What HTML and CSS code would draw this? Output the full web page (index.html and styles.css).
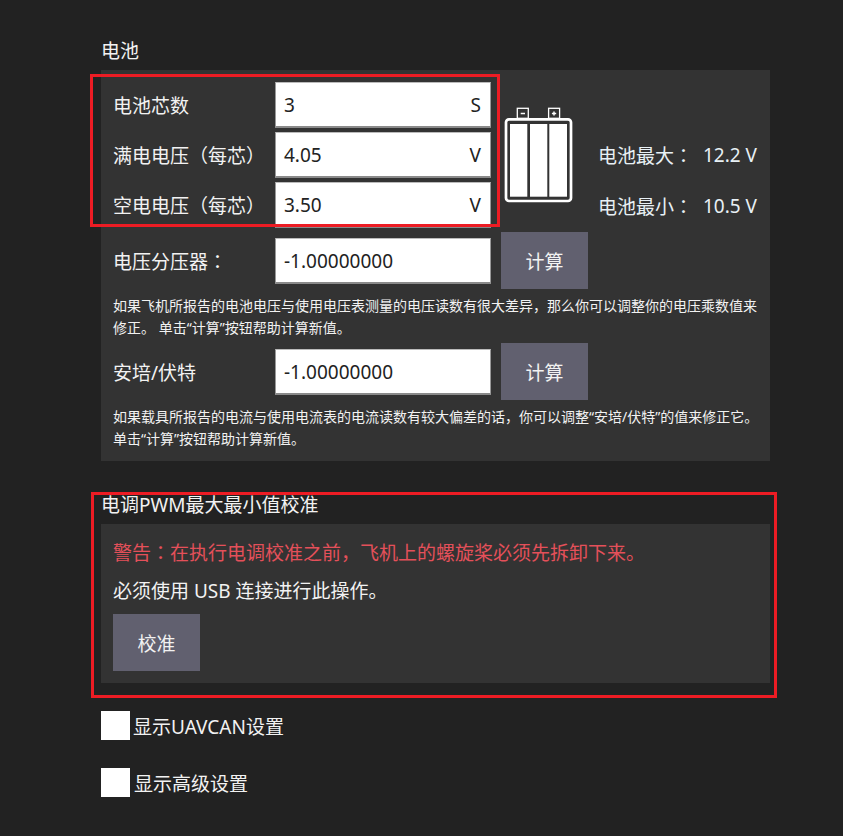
FILE: index.html
```html
<!DOCTYPE html>
<html lang="zh">
<head>
    <meta charset="utf-8">
    <title>电池</title>
    <link rel="stylesheet" href="styles.css">
</head>
<body>
    <div class="page">
        <h3 class="section-title">电池</h3>
        <div class="panel battery-panel">
            <div class="cell-block">
                <div class="cell-fields">
                    <div class="row">
                        <label class="row-label">电池芯数</label>
                        <div class="field"><span>3</span><span>S</span></div>
                    </div>
                    <div class="row">
                        <label class="row-label">满电电压（每芯）</label>
                        <div class="field"><span>4.05</span><span>V</span></div>
                    </div>
                    <div class="row">
                        <label class="row-label">空电电压（每芯）</label>
                        <div class="field"><span>3.50</span><span>V</span></div>
                    </div>
                </div>
                <svg class="battery-icon" width="70" height="96" viewBox="0 0 70 96">
                    <g fill="none" stroke="#fff" stroke-width="1.3">
                        <rect x="13.300" y="1.300" width="11" height="10"/>
                        <rect x="44.600" y="1.300" width="11" height="10"/>
                    </g>
                    <path d="M16.700 6.500h4.300M47.900 6.500h4.300M50 4.400v4.200" stroke="#fff" stroke-width="1.5"/>
                    <rect x="2" y="12.300" width="65" height="81.700" rx="3" fill="none" stroke="#fff" stroke-width="2.700"/>
                    <rect x="6" y="17" width="17.300" height="72.700" fill="#fff"/>
                    <rect x="26" y="17" width="17.300" height="72.700" fill="#fff"/>
                    <rect x="45.300" y="17" width="17.700" height="72.700" fill="#fff"/>
                </svg>
                <div class="cell-totals">
                    <div class="total"><span>电池最大<span class="colon" lang="zh-TW">：</span></span><span>12.2 V</span></div>
                    <div class="total"><span>电池最小<span class="colon" lang="zh-TW">：</span></span><span>10.5 V</span></div>
                </div>
            </div>
            <div class="row calc-row">
                <label class="row-label">电压分压器<span class="colon" lang="zh-TW">：</span></label>
                <div class="field"><span>-1.00000000</span></div>
                <button class="action-btn">计算</button>
            </div>
            <p class="hint">如果飞机所报告的电池电压与使用电压表测量的电压读数有很大差异，那么你可以调整你的电压乘数值来修正。 单击“计算”按钮帮助计算新值。</p>
            <div class="row calc-row">
                <label class="row-label">安培/伏特</label>
                <div class="field"><span>-1.00000000</span></div>
                <button class="action-btn">计算</button>
            </div>
            <p class="hint">如果载具所报告的电流与使用电流表的电流读数有较大偏差的话，你可以调整“安培/伏特”的值来修正它。 单击“计算”按钮帮助计算新值。</p>
        </div>

        <h3 class="section-title esc-title">电调PWM最大最小值校准</h3>
        <div class="panel esc-panel">
            <p class="warning">警告<span class="colon" lang="zh-TW">：</span>在执行电调校准之前，飞机上的螺旋桨必须先拆卸下来。</p>
            <p class="notice">必须使用 USB 连接进行此操作。</p>
            <button class="action-btn">校准</button>
        </div>

        <label class="check-row"><span class="check-box"></span><span>显示UAVCAN设置</span></label>
        <label class="check-row check-row-adv"><span class="check-box"></span><span>显示高级设置</span></label>
    </div>

    <div class="marker marker-cells"></div>
    <div class="marker marker-esc"></div>
</body>
</html>
```

FILE: styles.css
```css
html, body {
    margin: 0;
    height: 100%;
}
body {
    background-color: #222222;
    color: #f2f2f2;
    font-family: "Noto Sans", "Noto Sans CJK SC", sans-serif;
    font-size: 19px;
    position: relative;
    overflow: hidden;
}
.colon {
    font-family: "Noto Sans CJK TC", sans-serif;
}
.page {
    width: 669px;
    margin-left: 101px;
    padding-top: 38px;
}
.section-title {
    margin: 0;
    height: 32px;
    line-height: 26px;
    font-size: 19px;
    font-weight: 400;
}
.panel {
    background-color: #333333;
}
.battery-panel {
    height: 391px;
    padding: 12px 12px 0;
    box-sizing: border-box;
}
.cell-block {
    display: flex;
    align-items: flex-start;
}
.cell-fields {
    display: flex;
    flex-direction: column;
    gap: 4px;
}
.row {
    display: flex;
    align-items: center;
}
.row-label {
    width: 162px;
    flex-shrink: 0;
    line-height: 24px;
    padding-top: 2px;
    box-sizing: border-box;
    white-space: nowrap;
}
.field {
    width: 216px;
    height: 46px;
    box-sizing: border-box;
    padding: 1px 9px 0 8px;
    background-color: #fff;
    border: 1px solid #999;
    border-top-color: #bbb;
    border-bottom: 2px solid #8a8a8a;
    color: #222;
    display: flex;
    align-items: center;
    justify-content: space-between;
}
.battery-icon {
    margin: 25px 0 0 13px;
    flex-shrink: 0;
}
.cell-totals {
    margin: 59px 0 0 24px;
    display: flex;
    flex-direction: column;
    gap: 22px;
    color: #e8f0f5;
}
.total {
    display: flex;
    justify-content: space-between;
    width: 159px;
    line-height: 28px;
    white-space: nowrap;
}
.calc-row {
    margin-top: 4px;
    height: 57px;
}
.action-btn {
    width: 87px;
    height: 57px;
    margin-left: 10px;
    border: none;
    background-color: #61606f;
    color: #f2f2f2;
    font: inherit;
}
.hint {
    margin: 6px 0 0;
    width: 647px;
    font-size: 14px;
    line-height: 22px;
}
.hint + .calc-row {
    margin-top: 4px;
}
.esc-title {
    margin-top: 32px;
    height: 31px;
    line-height: 24px;
}
.esc-panel {
    height: 159px;
    padding: 15px 12px 0;
    box-sizing: border-box;
}
.esc-panel .action-btn {
    margin-left: 0;
}
.warning {
    margin: 0;
    line-height: 26px;
    color: #e4505a;
}
.notice {
    margin: 12px 0 10px;
    line-height: 26px;
}
.check-row {
    display: flex;
    align-items: center;
    gap: 3px;
    margin-top: 28px;
    height: 29px;
}
.check-row-adv {
    gap: 4px;
}
.check-box {
    width: 29px;
    height: 29px;
    background-color: #fff;
}
.marker {
    position: absolute;
    box-sizing: border-box;
    border: 3px solid #ed1c24;
}
.marker-cells {
    left: 90px;
    top: 74px;
    width: 410px;
    height: 153px;
}
.marker-esc {
    left: 91px;
    top: 492px;
    width: 686px;
    height: 206px;
}
```
